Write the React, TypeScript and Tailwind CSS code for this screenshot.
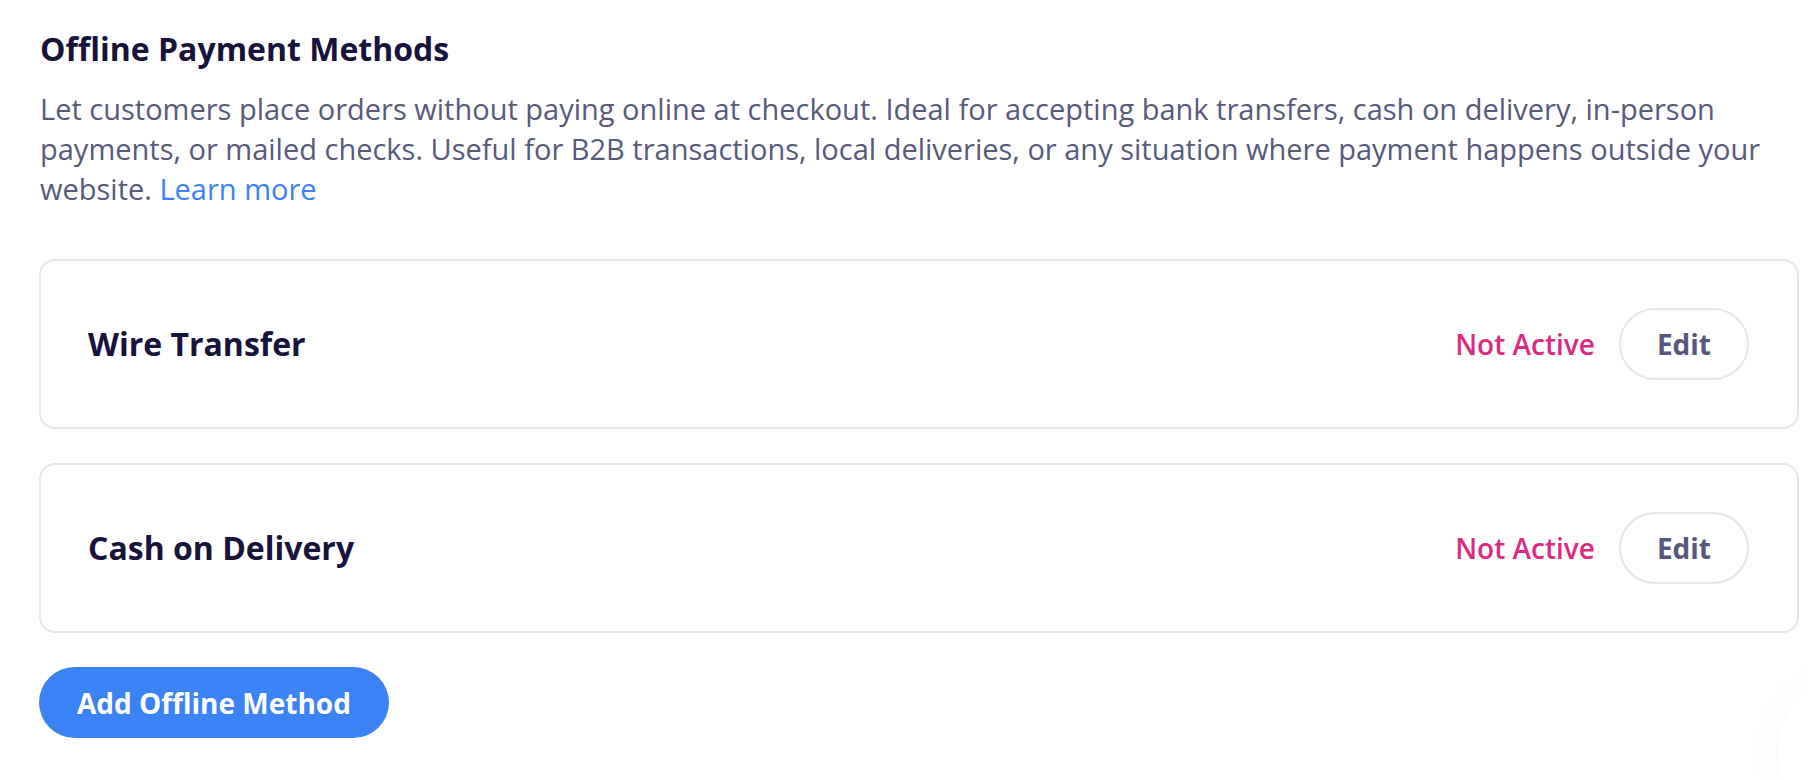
import React from "react";

const methods = ["Wire Transfer", "Cash on Delivery"];

export default function App() {
  return (
    <div
      className="relative min-h-[780px] w-[1808px] overflow-hidden bg-white"
      style={{ fontFamily: '"Open Sans", "Noto Sans", sans-serif' }}
    >
      <div className="flex w-[1808px] flex-col pl-[39px] pr-[9px] pt-[29px]">
        <h2 className="pl-[1px] text-[32px] font-bold leading-[40px] text-[#17133a]">
          Offline Payment Methods
        </h2>
        <p className="mr-[-9px] mt-[20px] pl-[1px] text-[29px] leading-[40px] text-[#575a7b]">
          Let customers place orders without paying online at checkout. Ideal for accepting bank transfers, cash on
          delivery, in-person payments, or mailed checks. Useful for B2B transactions, local deliveries, or any
          situation where payment happens outside your website.{" "}
          <a className="text-[#3b82f6]" href="#">
            Learn more
          </a>
        </p>
        <div className="mt-[50px] flex flex-col gap-[34px]">
          {methods.map((m) => (
            <div
              key={m}
              className="flex items-center justify-between rounded-[16px] border-2 border-[#e6e6ed] py-[47px] pl-[47px] pr-[48px]"
            >
              <span className="text-[32px] font-bold text-[#17133a]">{m}</span>
              <div className="flex items-center gap-[24px]">
                <span className="text-[28px] font-semibold text-[#dc2a82]">Not Active</span>
                <button className="h-[72px] rounded-full border-2 border-[#e6e6ed] px-[36px] text-[28px] font-bold text-[#565879]">
                  Edit
                </button>
              </div>
            </div>
          ))}
          <div>
            <button className="h-[71px] rounded-full bg-[#3b82f6] px-[38px] text-[28px] font-bold text-white">
              Add Offline Method
            </button>
          </div>
        </div>
      </div>
      <div className="absolute bottom-[-40px] right-[-110px] h-[140px] w-[140px] rounded-full bg-white shadow-[0_0_50px_rgba(0,0,0,0.04)]" />
    </div>
  );
}
